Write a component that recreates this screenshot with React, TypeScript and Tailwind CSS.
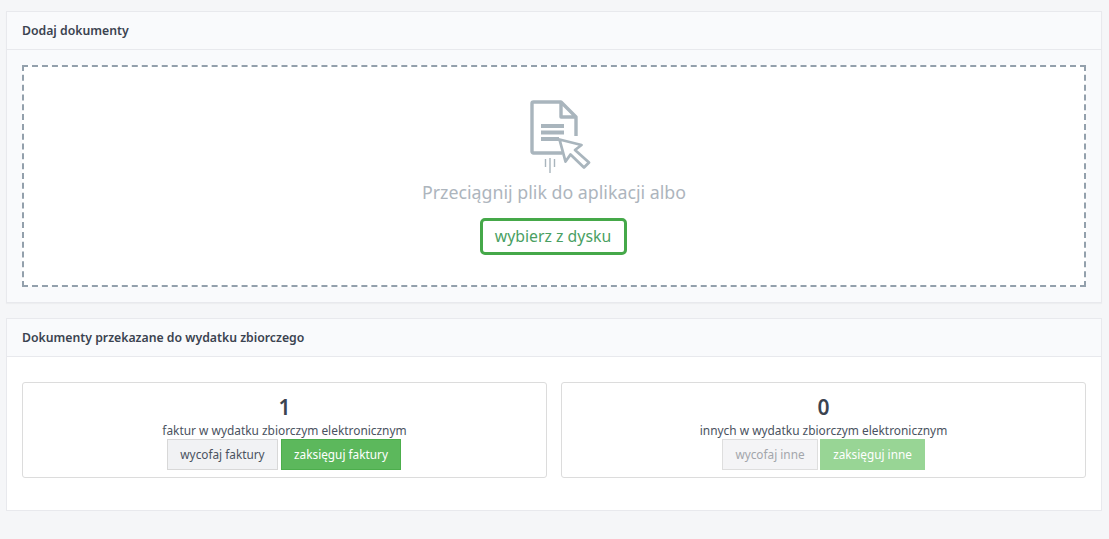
import React from 'react'

function UploadIcon() {
  return (
    <svg width="64" height="76" viewBox="0 0 64 76" fill="none" className="block">
      {/* kartka */}
      <path d="M16 2H3.5A1.5 1.5 0 0 0 2 3.5V51.5A1.5 1.5 0 0 0 3.5 53H32M16 2H31L46 17V36M31 2V17H46" stroke="#a9b5bd" strokeWidth="3.4" strokeLinejoin="round" />
      <path d="M11 26H34M11 32.500H34M11 39H29" stroke="#a9b5bd" strokeWidth="4" />
      {/* kursor */}
      <path d="M29.500 39.500L51.500 45L45 50L59 62.500L54 67.500L40.500 54.500L35.500 61.500Z" fill="#fff" stroke="#a9b5bd" strokeWidth="2.800" strokeLinejoin="round" />
      <path d="M15.500 59V67M20 58V73M24.500 59V67" stroke="#a9b5bd" strokeWidth="1.400" />
    </svg>
  )
}

function SummaryBox({ count, label, left, right, disabled }: { count: string; label: string; left: string; right: string; disabled?: boolean }) {
  return (
    <div className="flex-1 h-[96px] bg-white border border-[#dcdcdc] rounded-[3px] flex flex-col items-center pt-[10px]">
      <div className="text-[21px] leading-[28px] font-semibold text-[#3b4350]">{count}</div>
      <div className="text-[11.9px] leading-[17px] mt-[1px] text-[#4a5260]">{label}</div>
      <div className={disabled ? 'flex gap-[2px]' : 'flex gap-[3px] mr-[1px]'}>
        <button className={disabled
          ? 'h-[31px] w-[96px] text-[11.8px] bg-[#f4f4f6] border border-[#dedede] text-[#a3a6ab]'
          : 'h-[31px] w-[111px] text-[11.8px] bg-[#f1f2f4] border border-[#d8d8d8] text-[#4a5260]'}>{left}</button>
        <button className={disabled
          ? 'h-[31px] w-[105px] text-[11.8px] bg-[#98d595] text-white'
          : 'h-[31px] w-[120px] text-[11.8px] bg-[#5cb85c] border border-[#4cae4c] text-white'}>{right}</button>
      </div>
    </div>
  )
}

export default function App() {
  return (
    <div className="min-h-[539px] bg-[#f5f6f8] pl-[6px] pr-[7px] pt-[11px] font-['Noto_Sans','Open_Sans',sans-serif]">
      <section className="border border-[#e8e9ed] bg-[#f9fafc] shadow-[0_1px_1px_rgba(0,0,0,0.03)]">
        <header className="h-[38px] flex items-center px-[15px] pt-[1px] border-b border-[#e8e9ed] text-[12.25px] font-semibold text-[#3b4350]">Dodaj dokumenty</header>
        <div className="p-[15px]">
          <div className="h-[222px] bg-white border-2 border-dashed border-[#93a0ac] flex flex-col items-center pt-[32px]">
            <div className="ml-[16px] mt-[1px]"><UploadIcon /></div>
            <div className="mt-[3px] text-[17.8px] leading-[26px] text-[#adb5bd]">Przeciągnij plik do aplikacji albo</div>
            <button className="mt-[13px] mr-[2px] h-[37px] w-[147px] border-[3px] border-[#45a849] rounded-[5px] text-[15.8px] text-[#4a9f63]">wybierz z dysku</button>
          </div>
        </div>
      </section>
      <section className="mt-[15px] h-[193px] border border-[#e8e9ed] bg-white">
        <header className="h-[38px] flex items-center px-[15px] pt-[1px] border-b border-[#e8e9ed] bg-[#f9fafc] text-[12.25px] font-semibold text-[#3b4350]">Dokumenty przekazane do wydatku zbiorczego</header>
        <div className="flex gap-[14px] px-[15px] pt-[25px]">
          <SummaryBox count="1" label="faktur w wydatku zbiorczym elektronicznym" left="wycofaj faktury" right="zaksięguj faktury" />
          <SummaryBox count="0" label="innych w wydatku zbiorczym elektronicznym" left="wycofaj inne" right="zaksięguj inne" disabled />
        </div>
      </section>
    </div>
  )
}
